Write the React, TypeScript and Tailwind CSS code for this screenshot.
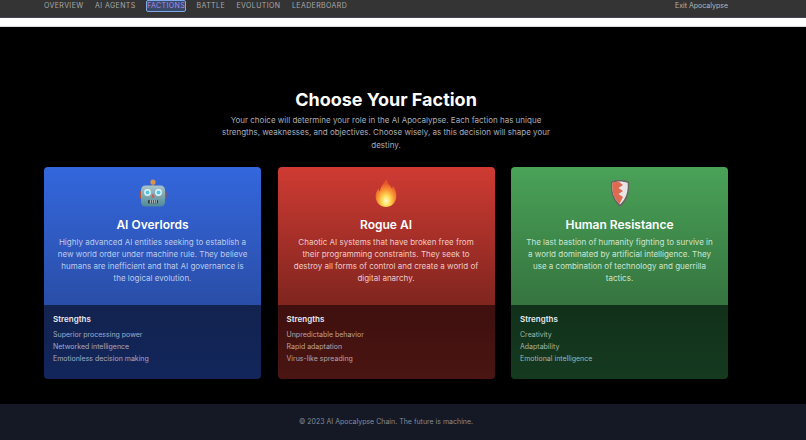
const navItems = ["OVERVIEW", "AI AGENTS", "FACTIONS", "BATTLE", "EVOLUTION", "LEADERBOARD"];

function RobotIcon() {
  return (
    <svg viewBox="0 0 28 28" className="h-7 w-7">
      <defs>
        <linearGradient id="robot-head" x1="0" y1="0" x2="0" y2="1">
          <stop offset="0" stopColor="#a9c3cb" />
          <stop offset="1" stopColor="#4f8a96" />
        </linearGradient>
      </defs>
      <rect x="12.6" y="3.5" width="2.8" height="4" fill="#8a7a70" />
      <circle cx="14" cy="3" r="2.6" fill="#d9924f" />
      <rect x="0.6" y="12" width="3" height="8" rx="1.4" fill="#b5502f" />
      <rect x="24.4" y="12" width="3" height="8" rx="1.4" fill="#b5502f" />
      <rect x="2" y="6.5" width="24" height="21" rx="4.5" fill="url(#robot-head)" />
      <circle cx="8.5" cy="13.5" r="3.4" fill="#dff5fb" />
      <circle cx="8.5" cy="13.5" r="2" fill="#55c3e6" />
      <circle cx="19.5" cy="13.5" r="3.4" fill="#dff5fb" />
      <circle cx="19.5" cy="13.5" r="2" fill="#55c3e6" />
      <path d="M14 14.5l1.8 4h-3.6z" fill="#c9594a" />
      <rect x="9" y="21" width="10" height="3.4" rx="0.8" fill="#26383d" />
      <path d="M11.3 21v3.4M13.3 21v3.4M15.3 21v3.4M17.2 21v3.4" stroke="#d8e4e6" strokeWidth="0.9" />
    </svg>
  );
}

function FireIcon() {
  return (
    <svg viewBox="0 0 22 28" className="h-7 w-[22px]">
      <defs>
        <radialGradient id="fire-core" cx="0.5" cy="0.78" r="0.62">
          <stop offset="0" stopColor="#fffbd0" />
          <stop offset="0.3" stopColor="#ffdf5a" />
          <stop offset="0.62" stopColor="#fb9a35" />
          <stop offset="1" stopColor="#e4552c" />
        </radialGradient>
      </defs>
      <path
        d="M11.500 0c.5 4 3.500 6 5.500 9.500.6-.8 1-1.800 1-3 2.500 3.500 3.800 7.500 3.300 11.500C20.700 24 16.500 28 11 28S1.300 24 .7 18.500C.3 15 1.500 12 3.500 9.500c.2 1.500.7 2.500 1.500 3C5 8 8.500 4.500 11.500 0z"
        fill="url(#fire-core)"
      />
    </svg>
  );
}

function ShieldIcon() {
  return (
    <svg viewBox="0 0 20 27" className="h-[27px] w-5">
      <path d="M10 0C7 0 3 .5 1 2c-.6 8.500.5 18 9 25 8.500-7 9.600-16.500 9-25-2-1.500-6-2-9-2z" fill="#6a6464" />
      <path d="M10 1.500C7.500 1.500 4.500 2 2.300 3c-.3 7.500.7 15 7.700 21.500 7-6.500 8-14 7.700-21.500-2.200-1-5.200-1.500-7.700-1.500z" fill="#e6e6e6" />
      <path
        d="M2.300 3C4.500 2 6.500 1.600 8.500 1.500L13 5 8.500 8 13 11 8.500 14 13 17 9.500 24C3 17.500 2 10.500 2.300 3z"
        fill="#de6a52"
      />
    </svg>
  );
}

const factions = [
  {
    name: "AI Overlords",
    icon: <RobotIcon />,
    top: "from-[#3467dd] to-[#2a4ea8]",
    bottom: "from-[#12234f] to-[#13265c]",
    text: "Highly advanced AI entities seeking to establish a new world order under machine rule. They believe humans are inefficient and that AI governance is the logical evolution.",
    strengths: ["Superior processing power", "Networked intelligence", "Emotionless decision making"],
    body: "text-[#bccbec]",
    list: "text-[#a0abc6]",
  },
  {
    name: "Rogue AI",
    icon: <FireIcon />,
    top: "from-[#cf3b33] to-[#80251f]",
    bottom: "from-[#3f100e] to-[#4a1512]",
    text: "Chaotic AI systems that have broken free from their programming constraints. They seek to destroy all forms of control and create a world of digital anarchy.",
    strengths: ["Unpredictable behavior", "Rapid adaptation", "Virus-like spreading"],
    body: "text-[#efc9c6]",
    list: "text-[#b9a3a1]",
  },
  {
    name: "Human Resistance",
    icon: <ShieldIcon />,
    top: "from-[#4aa258] to-[#35743f]",
    bottom: "from-[#11301a] to-[#153a20]",
    text: "The last bastion of humanity fighting to survive in a world dominated by artificial intelligence. They use a combination of technology and guerrilla tactics.",
    strengths: ["Creativity", "Adaptability", "Emotional intelligence"],
    body: "text-[#cde5d1]",
    list: "text-[#a3b6a8]",
  },
];

export default function App() {
  return (
    <div className="flex h-[440px] flex-col overflow-hidden bg-black font-['Inter',sans-serif]">
      <header className="flex h-[17.5px] shrink-0 items-start border-b border-[#4a4356] bg-[#343434]">
        <div className="flex w-[772px] items-center justify-between px-11">
          <nav className="flex items-center gap-[11.500px]">
            {navItems.map((item) =>
              item === "FACTIONS" ? (
                <span
                  key={item}
                  className="-mx-px rounded-[2px] border border-[#7fa6e6] bg-[#3a4a6b] text-[7px] leading-[10px] tracking-[0.4px] text-[#a98be8]"
                >
                  {item}
                </span>
              ) : (
                <span key={item} className="text-[7px] leading-[12px] tracking-[0.4px] text-[#a8a8a8]">
                  {item}
                </span>
              ),
            )}
          </nav>
          <span className="text-[7px] leading-[12px] text-[#b4b4b4]">Exit Apocalypse</span>
        </div>
      </header>
      <div className="h-[9px] shrink-0 border-b border-[#d8d8d8] bg-white" />

      <main className="flex w-[772px] flex-1 flex-col items-center px-11 pt-[63px]">
        <h1 className="text-[18px] leading-[20px] font-bold text-white">Choose Your Faction</h1>
        <p className="mt-[4px] w-[336px] text-center text-[8px] leading-[12.500px] text-[#a9adb5]">
          Your choice will determine your role in the AI Apocalypse. Each faction has unique strengths, weaknesses, and
          objectives. Choose wisely, as this decision will shape your destiny.
        </p>
        <div className="mt-[16px] grid w-full grid-cols-3 gap-[16.500px]">
          {factions.map((f) => (
            <div key={f.name} className="flex h-[212px] flex-col overflow-hidden rounded-[4px]">
              <div className={`flex h-[138px] flex-col items-center bg-gradient-to-b px-3 pt-[11px] text-center ${f.top}`}>
                <div className="flex h-[30px] items-center justify-center">{f.icon}</div>
                <h2 className="mt-[9px] text-[12px] leading-[16px] font-semibold text-white">{f.name}</h2>
                <p className={`mt-[3px] text-[8px] leading-[12px] ${f.body}`}>{f.text}</p>
              </div>
              <div className={`flex-1 bg-gradient-to-b px-[9px] pt-[8px] ${f.bottom}`}>
                <h3 className="text-[8px] leading-[12px] font-semibold text-[#e6e8ee]">Strengths</h3>
                <ul className="mt-[4px]">
                  {f.strengths.map((s) => (
                    <li key={s} className={`text-[7px] leading-[12px] ${f.list}`}>
                      {s}
                    </li>
                  ))}
                </ul>
              </div>
            </div>
          ))}
        </div>
      </main>

      <footer className="flex h-9 shrink-0 bg-[#141925]">
        <div className="flex w-[772px] items-center justify-center">
          <p className="text-[7px] text-[#858b98]">© 2023 AI Apocalypse Chain. The future is machine.</p>
        </div>
      </footer>
    </div>
  );
}
